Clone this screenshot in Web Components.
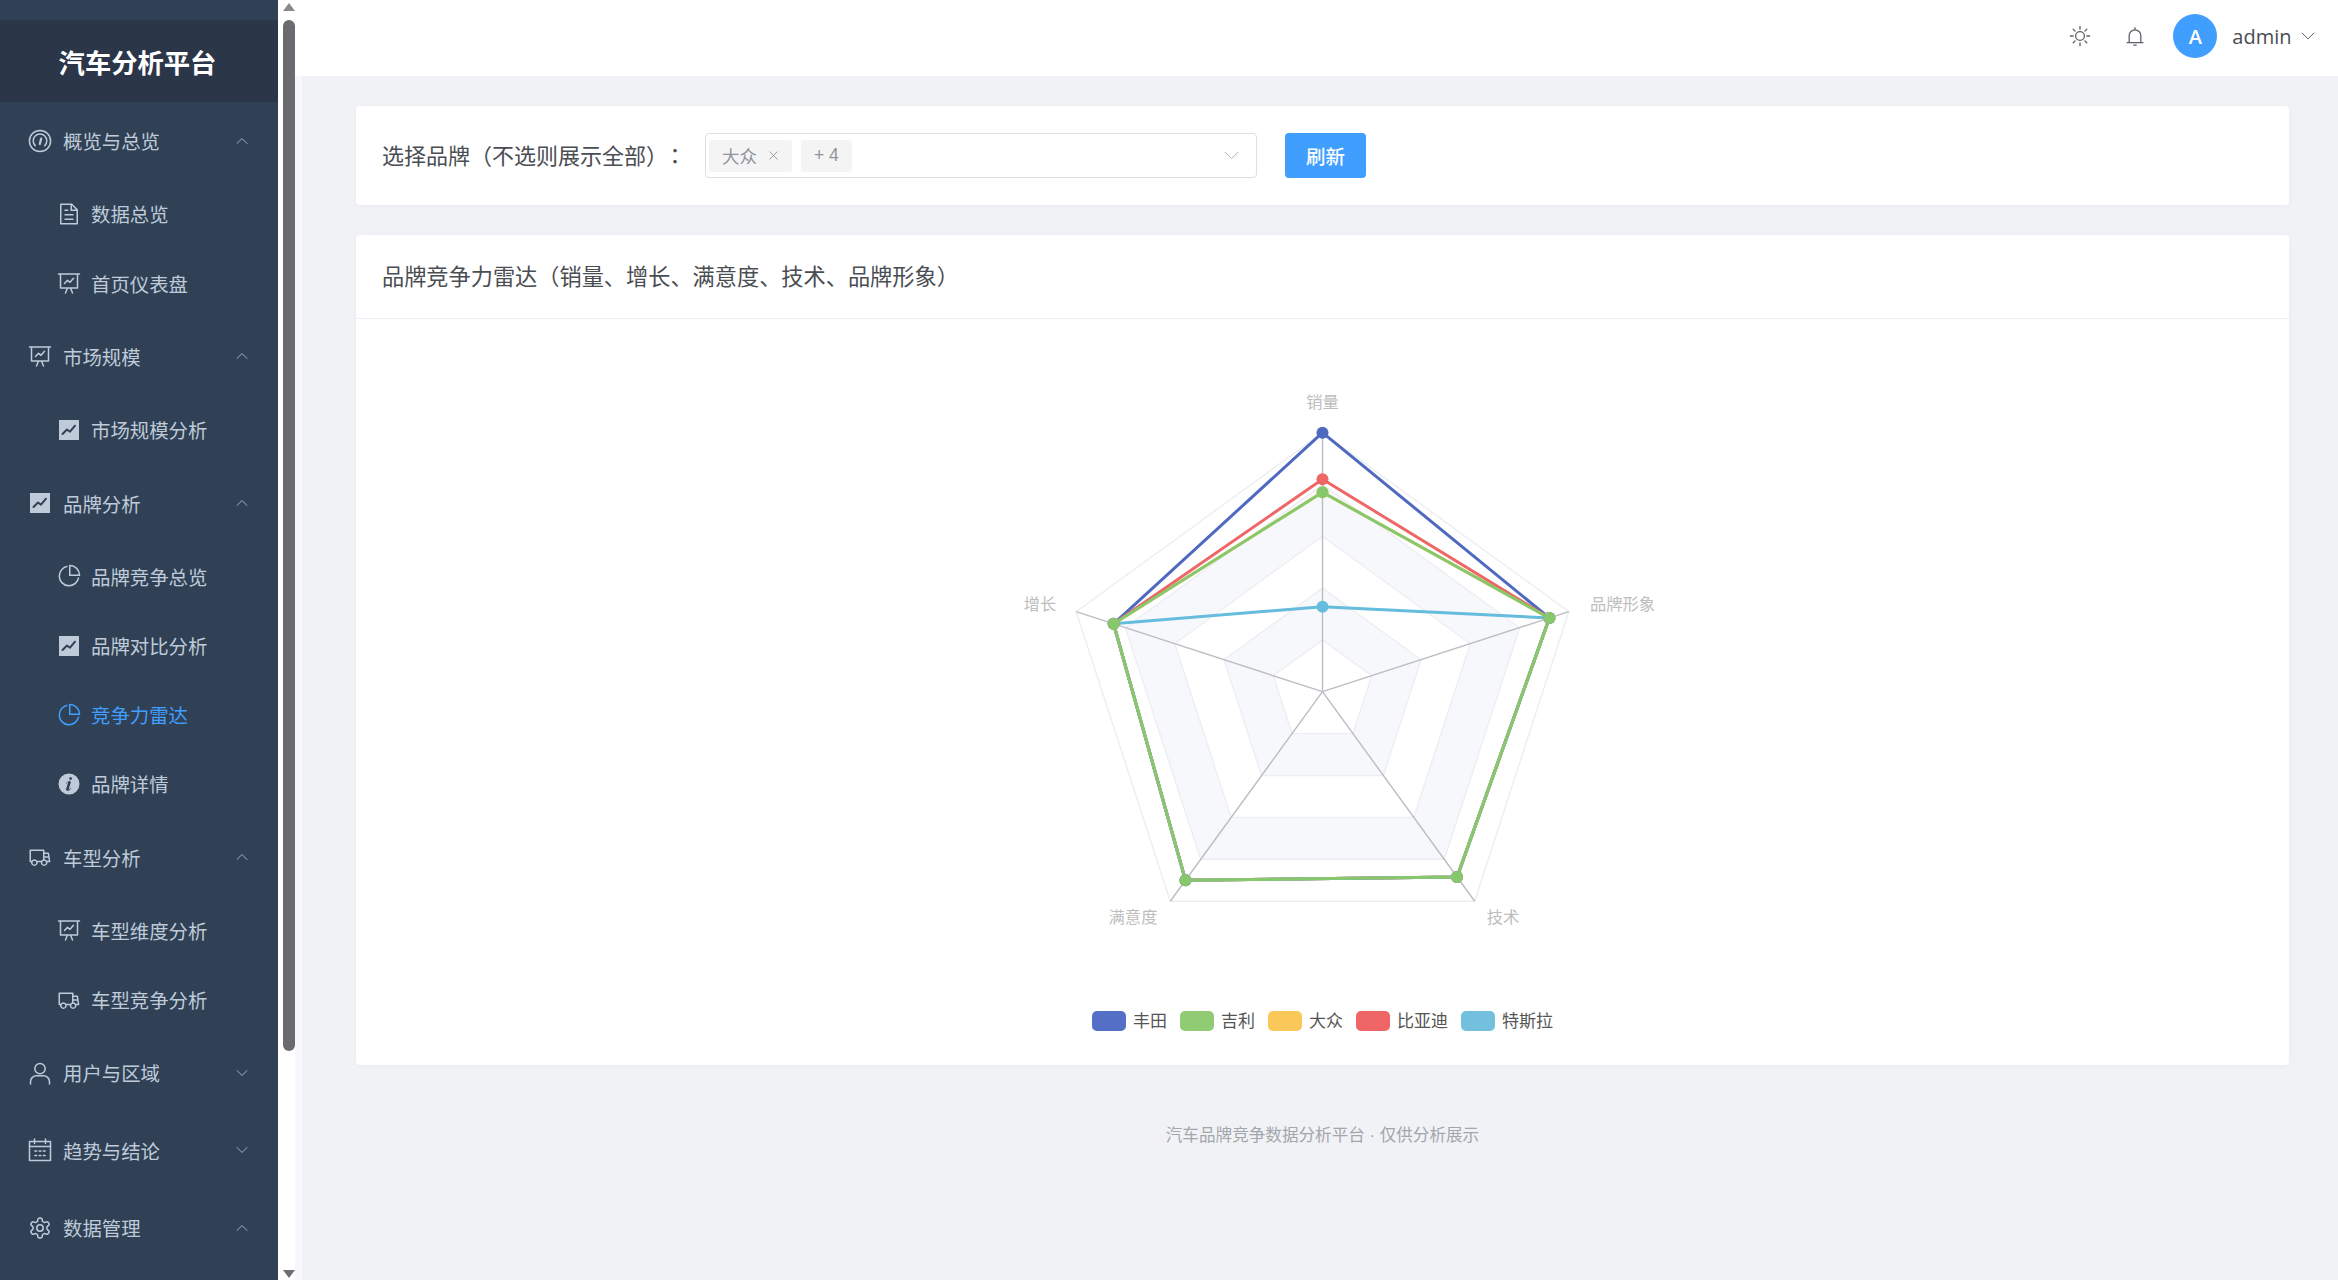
<!DOCTYPE html>
<html lang="zh-CN">
<head>
<meta charset="utf-8">
<title>汽车分析平台</title>
<style>
  html, body { margin: 0; height: 100%; overflow: hidden; }
  body { font-family: "Noto Sans CJK SC", "Noto Sans", sans-serif; background: #f0f2f5; }
</style>
</head>
<body>
<app-shell>
  <side-menu slot="side" brand="汽车分析平台">
    <menu-group label="概览与总览" icon="gauge" open>
      <menu-item label="数据总览" icon="document"></menu-item>
      <menu-item label="首页仪表盘" icon="board"></menu-item>
    </menu-group>
    <menu-group label="市场规模" icon="board" open>
      <menu-item label="市场规模分析" icon="trend"></menu-item>
    </menu-group>
    <menu-group label="品牌分析" icon="trend" open>
      <menu-item label="品牌竞争总览" icon="pie"></menu-item>
      <menu-item label="品牌对比分析" icon="trend"></menu-item>
      <menu-item label="竞争力雷达" icon="pie" active></menu-item>
      <menu-item label="品牌详情" icon="info"></menu-item>
    </menu-group>
    <menu-group label="车型分析" icon="van" open>
      <menu-item label="车型维度分析" icon="board"></menu-item>
      <menu-item label="车型竞争分析" icon="van"></menu-item>
    </menu-group>
    <menu-group label="用户与区域" icon="user"></menu-group>
    <menu-group label="趋势与结论" icon="calendar"></menu-group>
    <menu-group label="数据管理" icon="gear" open></menu-group>
  </side-menu>
  <fake-scrollbar slot="side"></fake-scrollbar>
  <top-bar slot="top" user="admin"></top-bar>
  <filter-card label="选择品牌（不选则展示全部）" colon="：" tag="大众" more="+ 4" action="刷新"></filter-card>
  <chart-card title-text="品牌竞争力雷达（销量、增长、满意度、技术、品牌形象）">
    <radar-chart></radar-chart>
    <chart-legend></chart-legend>
  </chart-card>
  <page-footer>汽车品牌竞争数据分析平台 · 仅供分析展示</page-footer>
</app-shell>

<script>
(function() {
    // icon shapes: the 1024 ones are filled, the 24 ones are stroked
    const ICONS = {
        document: { box: 1024, d: '<path fill="currentColor" d="M832 384H576V128H192v768h640V384zm-26.496-64L640 154.496V320h165.504zM160 64h480l256 256v608a32 32 0 0 1-32 32H160a32 32 0 0 1-32-32V96a32 32 0 0 1 32-32zm160 448h384v64H320v-64zm0-192h160v64H320v-64zm0 384h384v64H320v-64z"/>' },
        pie: { box: 1024, d: '<path fill="currentColor" d="M448 68.48v64.832A384.128 384.128 0 0 0 512 896a384.128 384.128 0 0 0 378.688-320h64.768A448.128 448.128 0 0 1 64 512 448.128 448.128 0 0 1 448 68.48z"/><path fill="currentColor" d="M576 97.28V448h350.72A384.064 384.064 0 0 0 576 97.28zM512 64V33.152A448 448 0 0 1 990.848 512H512V64z"/>' },
        info: { box: 1024, d: '<path fill="currentColor" d="M512 64a448 448 0 1 1 0 896.064A448 448 0 0 1 512 64zm67.2 275.072c33.28 0 60.288-23.104 60.288-57.344s-27.072-57.344-60.288-57.344c-33.28 0-60.16 23.104-60.16 57.344s26.88 57.344 60.16 57.344zM590.912 699.2c0-6.848 2.368-24.64 1.024-34.752l-52.608 60.544c-10.88 11.456-24.512 19.392-30.912 17.28a12.992 12.992 0 0 1-8.256-14.72l87.68-276.992c7.168-35.136-12.544-67.2-54.336-71.296-44.096 0-108.992 44.736-148.48 101.504 0 6.784-1.28 23.68.064 33.792l52.544-60.608c10.88-11.328 23.552-19.328 29.952-17.152a12.8 12.8 0 0 1 7.808 16.128L388.48 728.576c-10.048 32.256 8.96 63.872 55.04 71.04 67.84 0 107.904-43.648 147.456-100.416z"/>' },
        van: { box: 1024, d: '<path fill="currentColor" d="M128.896 736H96a32 32 0 0 1-32-32V224a32 32 0 0 1 32-32h576a32 32 0 0 1 32 32v96h164.544a32 32 0 0 1 31.616 27.136l54.144 352A32 32 0 0 1 922.688 736h-91.52a144 144 0 1 1-286.272 0H415.104a144 144 0 1 1-286.272 0zm23.36-64a143.872 143.872 0 0 1 239.488 0H568.32c17.088-25.6 42.24-45.376 71.744-55.808V256H128v416h24.256zm655.488 0h77.632l-19.648-128H704v64.896A144 144 0 0 1 807.744 672zm48.128-192-14.72-96H704v96h151.872zM688 832a80 80 0 1 0 0-160 80 80 0 0 0 0 160zm-416 0a80 80 0 1 0 0-160 80 80 0 0 0 0 160z"/>' },
        gauge: { box: 24, d: '<circle cx="12" cy="12" r="10.6"/><path d="M7.2 16.6a6.8 6.8 0 1 1 9.6 0"/><path d="M13.2 9.6 11.8 15" stroke-width="2.2"/>' },
        board: { box: 24, d: '<path d="M1.5 3h21M3.5 3v14h17V3M8.5 22l2-5M15.5 22l-2-5"/><path d="M7.5 12.5l3-3.2 2.5 2 3.5-4"/>' },
        trend: { box: 24, d: '<rect x="2" y="2" width="20" height="20" fill="currentColor" stroke="none"/><path d="M5.5 16l4.5-4.5 3 2.2 5-6" stroke="#304156" stroke-width="2"/>' },
        user: { box: 24, d: '<circle cx="12" cy="7.6" r="5.2"/><path d="M2.5 23v-2.2c0-3.8 3-6 6-6h7c3 0 6 2.2 6 6V23"/>' },
        calendar: { box: 24, d: '<rect x="1.5" y="3.5" width="21" height="19"/><path d="M1.5 8.5h21M6.5 1v4.5M17.5 1v4.5"/><path d="M7 13h1.5M11.3 13h1.5M15.5 13h1.5M7 17.5h1.5M11.3 17.5h1.5M15.5 17.5h1.5" stroke-width="1.7"/>' },
        gear: { box: 24, d: '<path d="M12.22 2h-.44a2 2 0 0 0-2 2v.18a2 2 0 0 1-1 1.73l-.43.25a2 2 0 0 1-2 0l-.15-.08a2 2 0 0 0-2.73.73l-.22.38a2 2 0 0 0 .73 2.73l.15.1a2 2 0 0 1 1 1.72v.51a2 2 0 0 1-1 1.74l-.15.09a2 2 0 0 0-.73 2.73l.22.38a2 2 0 0 0 2.73.73l.15-.08a2 2 0 0 1 2 0l.43.25a2 2 0 0 1 1 1.73V20a2 2 0 0 0 2 2h.44a2 2 0 0 0 2-2v-.18a2 2 0 0 1 1-1.73l.43-.25a2 2 0 0 1 2 0l.15.08a2 2 0 0 0 2.73-.73l.22-.39a2 2 0 0 0-.73-2.73l-.15-.08a2 2 0 0 1-1-1.74v-.5a2 2 0 0 1 1-1.74l.15-.09a2 2 0 0 0 .73-2.73l-.22-.38a2 2 0 0 0-2.73-.73l-.15.08a2 2 0 0 1-2 0l-.43-.25a2 2 0 0 1-1-1.73V4a2 2 0 0 0-2-2z"/><circle cx="12" cy="12" r="3.2"/>' },
        up: { box: 24, d: '<path d="M2 17 12 7l10 10"/>' },
        down: { box: 24, d: '<path d="M2 7l10 10L22 7"/>' },
        sun: { box: 24, d: '<circle cx="12" cy="12" r="4.8"/><path d="M12 1.5v3M12 19.5v3M1.5 12h3M19.5 12h3M4.6 4.6l2.1 2.1M17.3 17.3l2.1 2.1M4.6 19.4l2.1-2.1M17.3 6.7l2.1-2.1"/>' },
        bell: { box: 24, d: '<path d="M2.5 20h19M5 20v-8.5a7 7 0 0 1 14 0V20M12 2v2.5M10.5 22.8h3"/>' },
        close: { box: 24, d: '<path d="M4 4l16 16M20 4 4 20"/>' }
    };

    class AppIcon extends HTMLElement {
        constructor() {
            super();
            const icon = ICONS[this.getAttribute('name')] || ICONS.document;
            const sw = this.getAttribute('stroke') || '1.5';
            this.attachShadow({ mode: 'open' }).innerHTML = `
                <style>
                    :host { display: inline-flex; width: var(--icon-size, 24px); height: var(--icon-size, 24px); flex: none; }
                    svg { width: 100%; height: 100%; display: block; }
                </style>
                <svg viewBox="0 0 ${icon.box} ${icon.box}" fill="none" stroke="currentColor" stroke-width="${sw}"
                     stroke-linecap="round" stroke-linejoin="round">${icon.d.replace(/<path fill/g, '<path stroke="none" fill')}</svg>`;
        }
    }
    customElements.define('app-icon', AppIcon);

    const shellTemplate = document.createElement('template');
    shellTemplate.innerHTML = `
        <style>
            :host { display: flex; width: 100%; height: 100vh; overflow: hidden; }
            .side { display: flex; flex: none; height: 100%; }
            .main { flex: 1; min-width: 0; display: flex; flex-direction: column; background: #fff; }
            .content {
                flex: 1;
                display: flex;
                flex-direction: column;
                gap: 30px;
                padding: 30px 49px 0 54px;
                background: #f0f2f5;
                border-left: 7px solid #f8f8fc;
            }
        </style>
        <div class="side"><slot name="side"></slot></div>
        <div class="main">
            <slot name="top"></slot>
            <div class="content"><slot></slot></div>
        </div>
    `;
    class AppShell extends HTMLElement {
        constructor() {
            super();
            this.attachShadow({ mode: 'open' }).appendChild(shellTemplate.content.cloneNode(true));
        }
    }
    customElements.define('app-shell', AppShell);

    const sideTemplate = document.createElement('template');
    sideTemplate.innerHTML = `
        <style>
            :host {
                display: block;
                width: 278px;
                height: 100%;
                padding-top: 20px;
                box-sizing: border-box;
                overflow: hidden;
                background: #304156;
                color: #bfcbd9;
            }
            .brand {
                height: 82px;
                box-sizing: border-box;
                display: flex;
                align-items: center;
                justify-content: center;
                padding-right: 3px;
                background: #2b3649;
                color: #fff;
                font-size: 26.3px;
                font-weight: 700;
            }
        </style>
        <div class="brand"></div>
        <slot></slot>
    `;
    class SideMenu extends HTMLElement {
        constructor() {
            super();
            this.attachShadow({ mode: 'open' }).appendChild(sideTemplate.content.cloneNode(true));
            this.shadowRoot.querySelector('.brand').textContent = this.getAttribute('brand');
        }
    }
    customElements.define('side-menu', SideMenu);

    class MenuGroup extends HTMLElement {
        constructor() {
            super();
            const open = this.hasAttribute('open');
            this.attachShadow({ mode: 'open' }).innerHTML = `
                <style>
                    :host { display: block; }
                    .row {
                        height: 77.4px;
                        display: flex;
                        align-items: center;
                        gap: 11px;
                        padding: 0 30px 0 28px;
                        font-size: 19.4px;
                    }
                    .chev { --icon-size: 12px; margin-left: auto; opacity: .8; }
                </style>
                <div class="row">
                    <app-icon name="${this.getAttribute('icon')}"></app-icon>
                    <span>${this.getAttribute('label')}</span>
                    <app-icon class="chev" name="${open ? 'up' : 'down'}" stroke="2"></app-icon>
                </div>
                <slot></slot>`;
        }
    }
    customElements.define('menu-group', MenuGroup);

    class MenuItem extends HTMLElement {
        constructor() {
            super();
            this.attachShadow({ mode: 'open' }).innerHTML = `
                <style>
                    :host { display: block; }
                    :host([active]) { color: #409eff; }
                    .row {
                        height: 69.2px;
                        display: flex;
                        align-items: center;
                        gap: 10.5px;
                        padding-left: 56.5px;
                        font-size: 19.4px;
                    }
                </style>
                <div class="row">
                    <app-icon name="${this.getAttribute('icon')}"></app-icon>
                    <span>${this.getAttribute('label')}</span>
                </div>`;
        }
    }
    customElements.define('menu-item', MenuItem);

    // painted by hand so it sits where the reference has it
    const barTemplate = document.createElement('template');
    barTemplate.innerHTML = `
        <style>
            :host {
                display: flex;
                flex-direction: column;
                align-items: center;
                width: 17px;
                height: 100%;
                box-sizing: border-box;
                padding: 3px 0 2px 5px;
                background: #fff;
            }
            .up, .dn { width: 0; height: 0; border-left: 6px solid transparent; border-right: 6px solid transparent; }
            .up { border-bottom: 8px solid #8a888c; }
            .dn { border-top: 8px solid #6f6d72; margin-top: auto; }
            .thumb { width: 12px; height: 1031px; margin-top: 9px; background: #6c6a6f; border-radius: 6px; }
        </style>
        <div class="up"></div>
        <div class="thumb"></div>
        <div class="dn"></div>
    `;
    class FakeScrollbar extends HTMLElement {
        constructor() {
            super();
            this.attachShadow({ mode: 'open' }).appendChild(barTemplate.content.cloneNode(true));
        }
    }
    customElements.define('fake-scrollbar', FakeScrollbar);

    class TopBar extends HTMLElement {
        constructor() {
            super();
            this.attachShadow({ mode: 'open' }).innerHTML = `
                <style>
                    :host {
                        display: flex;
                        align-items: center;
                        justify-content: flex-end;
                        flex: none;
                        height: 76px;
                        box-sizing: border-box;
                        padding: 0 23px 4px 0;
                        background: #fff;
                        color: #5a5e66;
                    }
                    .sun { --icon-size: 22px; margin-right: 34px; }
                    .bell { --icon-size: 20px; margin-right: 28px; }
                    .avatar {
                        width: 44px;
                        height: 44px;
                        border-radius: 50%;
                        background: #409eff;
                        color: #fff;
                        display: flex;
                        align-items: center;
                        justify-content: center;
                        font: 600 20px "Open Sans", sans-serif;
                        margin-right: 15px;
                    }
                    .name { font: 20px "Open Sans", sans-serif; color: #4a4d52; margin-right: 9.5px; }
                    .chev { --icon-size: 14px; }
                </style>
                <app-icon class="sun" name="sun" stroke="1.4"></app-icon>
                <app-icon class="bell" name="bell" stroke="1.5"></app-icon>
                <div class="avatar">A</div>
                <span class="name">${this.getAttribute('user')}</span>
                <app-icon class="chev" name="down" stroke="1.7"></app-icon>`;
        }
    }
    customElements.define('top-bar', TopBar);

    class FilterCard extends HTMLElement {
        constructor() {
            super();
            this.attachShadow({ mode: 'open' }).innerHTML = `
                <style>
                    :host {
                        display: flex;
                        align-items: center;
                        height: 99px;
                        box-sizing: border-box;
                        padding: 0 26px;
                        background: #fff;
                        border-radius: 4px;
                        box-shadow: 0 1px 4px rgba(0,0,0,.03);
                    }
                    .label { width: 323px; flex: none; font-size: 22px; color: #4a4d52; white-space: nowrap; margin-bottom: 3px; }
                    .colon { font-family: "Noto Sans CJK TC", sans-serif; margin-left: 7px; }
                    .select {
                        width: 552px;
                        height: 45px;
                        box-sizing: border-box;
                        display: flex;
                        align-items: center;
                        gap: 9px;
                        padding: 0 17px 0 3px;
                        border: 1px solid #dcdfe6;
                        border-radius: 4px;
                        flex: none;
                    }
                    .tag {
                        height: 32px;
                        display: flex;
                        align-items: center;
                        gap: 11px;
                        padding: 0 13px;
                        background: #f4f4f5;
                        border-radius: 3px;
                        color: #909399;
                        font-family: "Liberation Sans", "Noto Sans CJK SC", sans-serif;
                        font-size: 17.5px;
                        white-space: nowrap;
                    }
                    .tag app-icon { --icon-size: 11px; }
                    .chev { --icon-size: 15px; margin-left: auto; color: #a8abb2; }
                    .btn {
                        margin-left: 28px;
                        width: 81px;
                        height: 45px;
                        display: flex;
                        align-items: center;
                        justify-content: center;
                        background: #409eff;
                        color: #fff;
                        border-radius: 4px;
                        font-size: 19.5px;
                        font-weight: 500;
                    }
                </style>
                <span class="label">${this.getAttribute('label')}<span class="colon" lang="zh-TW">${this.getAttribute('colon')}</span></span>
                <div class="select">
                    <span class="tag">${this.getAttribute('tag')}<app-icon name="close" stroke="2"></app-icon></span>
                    <span class="tag">${this.getAttribute('more')}</span>
                    <app-icon class="chev" name="down" stroke="1.5"></app-icon>
                </div>
                <div class="btn">${this.getAttribute('action')}</div>`;
        }
    }
    customElements.define('filter-card', FilterCard);

    class ChartCard extends HTMLElement {
        constructor() {
            super();
            this.attachShadow({ mode: 'open' }).innerHTML = `
                <style>
                    :host {
                        display: block;
                        height: 830px;
                        box-sizing: border-box;
                        background: #fff;
                        border-radius: 4px;
                        box-shadow: 0 1px 4px rgba(0,0,0,.03);
                    }
                    .head {
                        height: 84px;
                        box-sizing: border-box;
                        display: flex;
                        align-items: center;
                        padding: 0 26px 3px;
                        border-bottom: 1px solid #ebeef5;
                        font-size: 22.2px;
                        color: #4a4d52;
                    }
                    .body { display: flex; flex-direction: column; align-items: center; padding-top: 61px; }
                </style>
                <div class="head">${this.getAttribute('title-text')}</div>
                <div class="body"><slot></slot></div>`;
        }
    }
    customElements.define('chart-card', ChartCard);

    // values are read off the picture as fractions of the outer radius
    const AXES = ['销量', '增长', '满意度', '技术', '品牌形象'];
    const SERIES = [
        { color: '#4f69c0', v: [1.000, .848, .900, .884, .921] },
        { color: '#fac858', v: [.770, .848, .900, .884, .921] },
        { color: '#ee6666', v: [.820, .848, .900, .884, .921] },
        { color: '#65bcdc', v: [.328, .848, .900, .884, .921] },
        { color: '#88c86c', v: [.770, .848, .900, .884, .921] }
    ];

    class RadarChart extends HTMLElement {
        constructor() {
            super();
            const cx = 359.5, cy = 311.7, R = 259;
            const at = (i, f) => {
                const a = -Math.PI / 2 - i * 2 * Math.PI / 5;
                return [cx + Math.cos(a) * R * f, cy + Math.sin(a) * R * f];
            };
            const ring = f => AXES.map((_, i) => at(i, f).map(n => n.toFixed(1)).join(',')).join(' ');

            let bands = '';
            [[.4, .2], [.8, .6]].forEach(([o, n]) => {
                bands += `<path fill="#f7f8fc" fill-rule="evenodd" d="M${ring(o)}Z M${ring(n)}Z"/>`;
            });
            let rings = '';
            [.2, .4, .6, .8, 1].forEach(f => {
                rings += `<polygon points="${ring(f)}" fill="none" stroke="#eceef2" stroke-width="1.4"/>`;
            });
            const spokes = AXES.map((_, i) => {
                const p = at(i, 1);
                return `<line x1="${cx}" y1="${cy}" x2="${p[0]}" y2="${p[1]}" stroke="#bcbdc3" stroke-width="1.4"/>`;
            }).join('');
            const lines = SERIES.map(s => {
                const pts = s.v.map((f, i) => at(i, f).map(n => n.toFixed(1)).join(',')).join(' ');
                return `<polygon points="${pts}" fill="none" stroke="${s.color}" stroke-width="3" stroke-linejoin="round"/>`;
            }).join('');
            const dots = SERIES.map(s => s.v.map((f, i) => {
                const p = at(i, f);
                return `<circle cx="${p[0]}" cy="${p[1]}" r="6" fill="${s.color}"/>`;
            }).join('')).join('');

            const labels = [
                [359.5, 21, 0],
                [77, 223, 1],
                [170, 536, 2],
                [540, 536, 3],
                [659.5, 223, 4]
            ].map(([x, y, i]) =>
                `<text x="${x}" y="${y}" text-anchor="middle" dominant-baseline="central">${AXES[i]}</text>`).join('');

            this.attachShadow({ mode: 'open' }).innerHTML = `
                <style>
                    :host { display: block; width: 720px; height: 560px; }
                    svg { display: block; }
                    text { font-size: 16.3px; fill: #bdbdbd; font-family: "Noto Sans CJK SC", sans-serif; }
                </style>
                <svg width="720" height="560" viewBox="0 0 720 560">${bands}${rings}${spokes}${lines}${dots}${labels}</svg>`;
        }
    }
    customElements.define('radar-chart', RadarChart);

    const LEGEND = [['丰田', '#5470c6'], ['吉利', '#91cc75'], ['大众', '#fac858'], ['比亚迪', '#ee6666'], ['特斯拉', '#73c0de']];

    class ChartLegend extends HTMLElement {
        constructor() {
            super();
            const items = LEGEND.map(([name, color]) =>
                `<span class="item"><i style="background:${color}"></i><span class="t">${name}</span></span>`).join('');
            this.attachShadow({ mode: 'open' }).innerHTML = `
                <style>
                    :host { display: flex; gap: 13px; margin-top: 70px; font-size: 17px; color: #555; line-height: 20px; }
                    .item { display: flex; align-items: center; gap: 7px; height: 22px; }
                    .t { margin-bottom: 3px; }
                    i { width: 34px; height: 20px; border-radius: 5px; display: block; }
                </style>
                ${items}`;
        }
    }
    customElements.define('chart-legend', ChartLegend);

    class PageFooter extends HTMLElement {
        constructor() {
            super();
            this.attachShadow({ mode: 'open' }).innerHTML = `
                <style>
                    :host {
                        display: block;
                        margin-top: 28.5px;
                        text-align: center;
                        font-family: "Liberation Sans", "Noto Sans CJK SC", sans-serif;
                        font-size: 16.6px;
                        line-height: 24px;
                        color: #a3a6ab;
                    }
                </style>
                <slot></slot>`;
        }
    }
    customElements.define('page-footer', PageFooter);
})();
</script>
</body>
</html>
